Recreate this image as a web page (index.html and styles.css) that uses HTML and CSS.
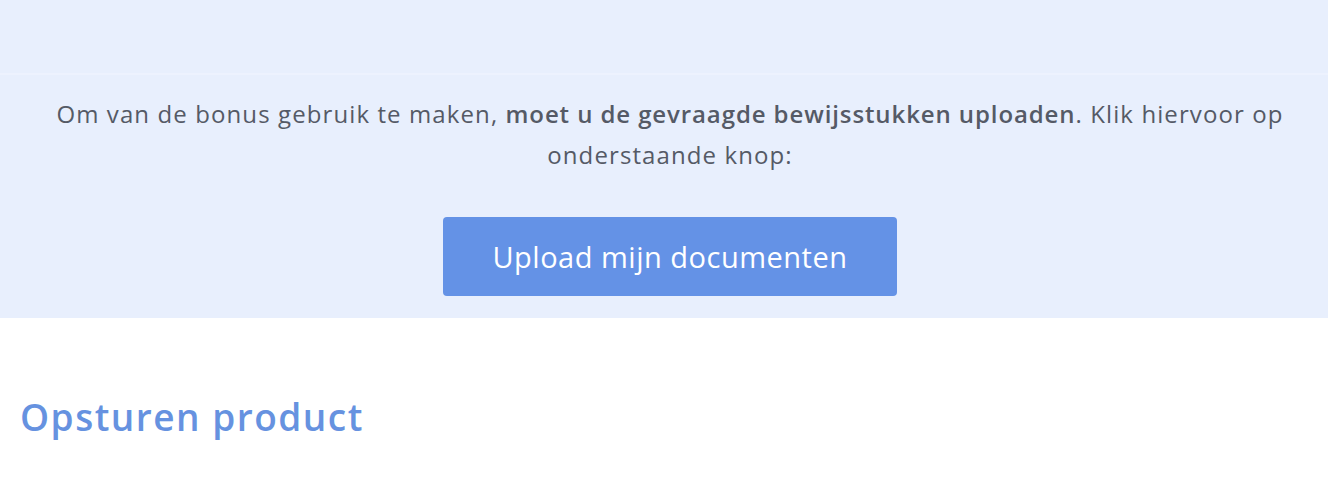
FILE: index.html
```html
<!DOCTYPE html>
<html lang="nl">
<head>
  <meta charset="UTF-8" />
  <title>Bonus</title>
  <meta name="viewport" content="width=device-width, initial-scale=1.0" />
  <link rel="stylesheet" href="styles.css">
</head>
<body>
  <div class="bonus">
    <div class="bonus-top"></div>
    <div class="bonus-body">
      <p class="intro">Om van de bonus gebruik te maken, <strong>moet u de gevraagde bewijsstukken uploaden</strong>. Klik hiervoor op onderstaande knop:</p>
      <a class="upload-btn" href="#">Upload mijn documenten</a>
    </div>
  </div>
  <div class="section">
    <h2>Opsturen product</h2>
  </div>
</body>
</html>
```

FILE: styles.css
```css
body { font-family: "Open Sans", "Noto Sans", sans-serif; background: #fff; margin: 0; padding: 0; color: #555a66; }
.bonus { background: #e8effd; }
.bonus-top { height: 73px; border-bottom: 2px solid #edf2fe; }
.bonus-body { padding: 18px 34px 22px 46px; display: flex; flex-direction: column; align-items: center; }
.intro { margin: 0; font-size: 24px; line-height: 41px; text-align: center; max-width: 1240px; letter-spacing: 1.1px; }
.intro strong { font-weight: 600; letter-spacing: 0.9px; }
.upload-btn { margin-top: 42px; width: 454px; height: 79px; display: flex; align-items: center; justify-content: center; background: #6492e6; color: #fff; font-size: 29px; letter-spacing: 0.5px; text-decoration: none; border-radius: 4px; }
.section { padding: 76px 20px 30px; }
.section h2 { margin: 0; font-size: 37px; font-weight: 600; letter-spacing: 1.5px; color: #6692e0; line-height: 46px; }
```
